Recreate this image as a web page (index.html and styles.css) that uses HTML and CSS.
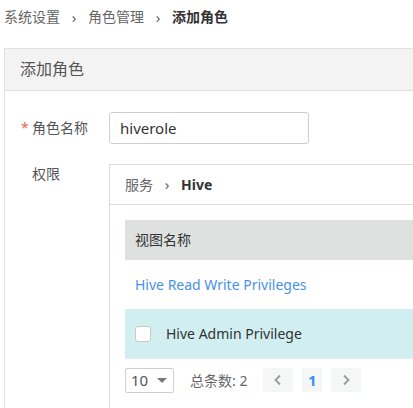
FILE: index.html
```html
<!DOCTYPE html>
<html lang="zh">
<head>
<meta charset="utf-8">
<link rel="stylesheet" href="styles.css">
</head>
<body>
<div class="page">
  <div class="crumbs">
    <span class="crumb">系统设置</span><span class="sep">›</span><span class="crumb">角色管理</span><span class="sep">›</span><span class="crumb current">添加角色</span>
  </div>
  <div class="card">
    <div class="card-header">添加角色</div>
    <div class="card-body">
      <div class="form-row">
        <label class="label label-input"><span class="req">*</span>角色名称</label>
        <div class="input">hiverole</div>
      </div>
      <div class="form-row row-perm">
        <label class="label label-top">权限</label>
        <div class="panel">
          <div class="panel-crumbs"><span class="pc-item">服务</span><span class="pc-sep">›</span><span class="pc-current">Hive</span></div>
          <div class="panel-body">
            <div class="table">
              <div class="th">视图名称</div>
              <div class="tr"><a class="link">Hive Read Write Privileges</a></div>
              <div class="tr selected"><span class="checkbox"></span><span class="cell-text">Hive Admin Privilege</span></div>
            </div>
            <div class="pager">
              <div class="select"><span>10</span><span class="caret"></span></div>
              <span class="total">总条数: 2</span>
              <span class="pbtn"><svg width="10" height="12" viewBox="0 0 10 12"><path d="M7 1.5 L2.5 6 L7 10.5" fill="none" stroke="#9a9a9a" stroke-width="1.8"/></svg></span>
              <span class="pbtn page-num">1</span>
              <span class="pbtn"><svg width="10" height="12" viewBox="0 0 10 12"><path d="M3 1.5 L7.5 6 L3 10.5" fill="none" stroke="#9a9a9a" stroke-width="1.8"/></svg></span>
            </div>
          </div>
        </div>
      </div>
    </div>
  </div>
</div>
</body>
</html>
```
FILE: styles.css
```css
html, body {
  margin: 0;
  padding: 0;
  overflow: hidden;
  background: #fff;
}
body {
  font-family: "Noto Sans", "Noto Sans CJK SC", sans-serif;
  font-size: 14px;
  color: #333;
  height: 408px;
}
.page {
  padding-left: 4px;
  height: 100%;
  display: flex;
  flex-direction: column;
}
.crumbs {
  height: 34px;
  line-height: 34px;
  display: flex;
  align-items: center;
  color: #666;
  flex: none;
}
.sep {
  width: 28px;
  text-align: center;
  color: #666;
  font-size: 15px;
}
.current {
  color: #333;
  font-weight: bold;
}
.card {
  margin-top: 14px;
  border-top: 1px solid #e2e2e2;
  border-left: 1px solid #e2e2e2;
  flex: 1;
  min-height: 0;
  overflow: hidden;
}
.card-header {
  height: 41px;
  line-height: 41px;
  padding-left: 15px;
  background: #f3f3f3;
  border-bottom: 1px solid #dedede;
  font-size: 16px;
  color: #555;
}
.card-body {
  padding: 21px 0 0 16px;
}
.form-row {
  display: flex;
  align-items: flex-start;
}
.row-perm {
  margin-top: 20px;
}
.label {
  width: 88px;
  flex: none;
  color: #555;
}
.label-input {
  line-height: 32px;
}
.label-top {
  line-height: 20px;
  padding-left: 11px;
  width: 77px;
}
.req {
  color: #e86a5a;
  display: inline-block;
  width: 11px;
}
.input {
  height: 30px;
  line-height: 30px;
  border: 1px solid #cfcfcf;
  border-radius: 3px;
  padding: 0 10px;
  width: 178px;
  font-size: 15px;
  color: #333;
}
.panel {
  flex: 1;
  border-top: 1px solid #dcdcdc;
  border-left: 1px solid #dcdcdc;
  height: 260px;
}
.panel-crumbs {
  height: 39px;
  line-height: 39px;
  border-bottom: 1px solid #dcdcdc;
  padding-left: 15px;
  display: flex;
  color: #666;
}
.pc-sep {
  width: 28px;
  text-align: center;
  font-size: 15px;
}
.pc-current {
  font-weight: bold;
  color: #333;
}
.panel-body {
  padding: 15px 0 0 15px;
}
.th {
  height: 40px;
  line-height: 40px;
  background: #dfe1e1;
  padding-left: 10px;
  color: #333;
}
.tr {
  height: 49px;
  line-height: 49px;
  padding-left: 10px;
  display: flex;
  align-items: center;
}
.link {
  color: #4a90ea;
}
.selected {
  background: #d1eff1;
  height: 49px;
  border-bottom: 1px solid #e2ecec;
}
.checkbox {
  width: 14px;
  height: 14px;
  border: 1px solid #c9c9c9;
  border-radius: 3px;
  background: #fff;
  margin-right: 15px;
}
.cell-text {
  color: #333;
}
.pager {
  display: flex;
  align-items: center;
  margin-top: 8px;
  height: 26px;
}
.select {
  height: 23px;
  border: 1px solid #cfcfcf;
  border-radius: 2px;
  display: flex;
  align-items: center;
  justify-content: space-between;
  padding: 0 6px 0 5px;
  width: 36px;
  color: #555;
  font-size: 15px;
}
.caret {
  width: 0;
  height: 0;
  border-left: 5px solid transparent;
  border-right: 5px solid transparent;
  border-top: 5px solid #777;
}
.total {
  margin-left: 16px;
  color: #666;
}
.pbtn {
  width: 30px;
  height: 24px;
  background: #f5f6f6;
  display: flex;
  align-items: center;
  justify-content: center;
  margin-left: 9px;
}
.total + .pbtn {
  margin-left: 16px;
}
.page-num {
  width: 20px;
  color: #3a8ef0;
  font-weight: bold;
  font-size: 15px;
}
```
